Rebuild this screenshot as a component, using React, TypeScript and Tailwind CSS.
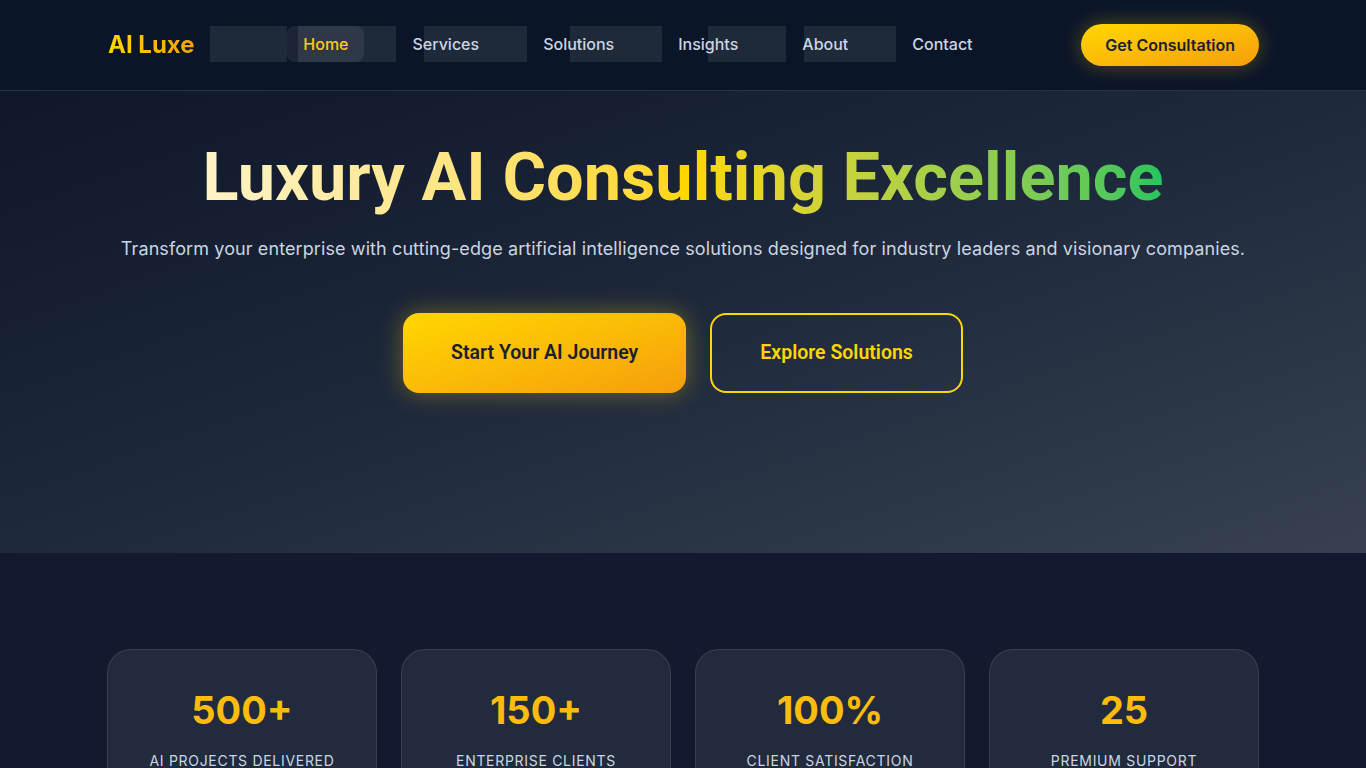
import React from "react";

const links = ["Home", "Services", "Solutions", "Insights", "About", "Contact"];

const stats = [
  { n: "500+", l: "AI Projects Delivered" },
  { n: "150+", l: "Enterprise Clients" },
  { n: "100%", l: "Client Satisfaction" },
  { n: "25", l: "Premium Support" },
];

export default function App() {
  return (
    <div className="min-h-screen bg-[#0f172a] font-['Inter','Noto_Sans',sans-serif] text-white">
      <header className="border-b border-[#2a3343] bg-[#0b1528] py-6">
        <div className="mx-auto flex max-w-6xl items-center justify-between">
          <div className="bg-gradient-to-r from-[#ffd700] to-[#f59e0b] bg-clip-text pl-px text-2xl font-bold text-transparent">
            AI Luxe
          </div>
          <nav className="isolate mb-0.5 flex items-center gap-8">
            {links.map((l, i) => (
              <a
                key={l}
                className={
                  "relative rounded-lg px-4 py-1.5 text-base leading-6 font-medium " +
                  (i === 0 ? "bg-white/[0.07] text-[#facc15]" : "text-[#cbd5e1]")
                }
              >
                <span className="absolute top-0 right-full -z-10 h-full w-full bg-[#1e2939]" />
                {l}
              </a>
            ))}
          </nav>
          <button className="rounded-full bg-gradient-to-br from-[#ffd700] to-[#f59e0b] px-6 py-[9px] text-base leading-6 font-semibold text-[#1a2030] shadow-[0_0_20px_rgba(255,215,0,0.3)]">
            Get Consultation
          </button>
        </div>
      </header>

      <section className="bg-gradient-to-br from-[#0f172a] via-[#1e293b] to-[#374151] pt-[48px] pb-[160px] text-center">
        <h1 className="mx-auto w-fit bg-gradient-to-r from-[#fef3c7] via-[#ffd700] to-[#22c55e] bg-clip-text font-['Roboto',sans-serif] text-[66.7px] leading-[76.8px] font-bold text-transparent">
          Luxury AI Consulting Excellence
        </h1>
        <p className="mt-[19px] text-lg leading-7 tracking-[0.1px] text-[#cbd5e1]">
          Transform your enterprise with cutting-edge artificial intelligence solutions designed for industry leaders and visionary companies.
        </p>
        <div className="mt-[50px] flex justify-center gap-6">
          <button className="rounded-2xl bg-gradient-to-br from-[#ffd700] to-[#f59e0b] px-12 py-[26px] font-['Roboto',sans-serif] text-[19.5px] leading-7 font-semibold text-[#1a2030] shadow-[0_0_24px_rgba(255,215,0,0.35)]">
            Start Your AI Journey
          </button>
          <button className="rounded-2xl border-2 border-[#ffd700] px-12 py-6 font-['Roboto',sans-serif] text-[19.5px] leading-7 font-semibold text-[#ffd700]">
            Explore Solutions
          </button>
        </div>
      </section>

      <section className="bg-[#111a2e] pt-24 pb-24">
        <div className="mx-auto grid max-w-6xl grid-cols-4 gap-6">
          {stats.map((s) => (
            <div
              key={s.n}
              className="rounded-3xl border border-white/10 bg-[#222b3d] px-6 pt-10 pb-10 text-center"
            >
              <div className="text-[38px] leading-10 font-bold text-[#fbbc0c]">{s.n}</div>
              <div className="mt-[21px] text-sm leading-5 tracking-wider text-[#cbd5e1] uppercase">{s.l}</div>
            </div>
          ))}
        </div>
      </section>
    </div>
  );
}
